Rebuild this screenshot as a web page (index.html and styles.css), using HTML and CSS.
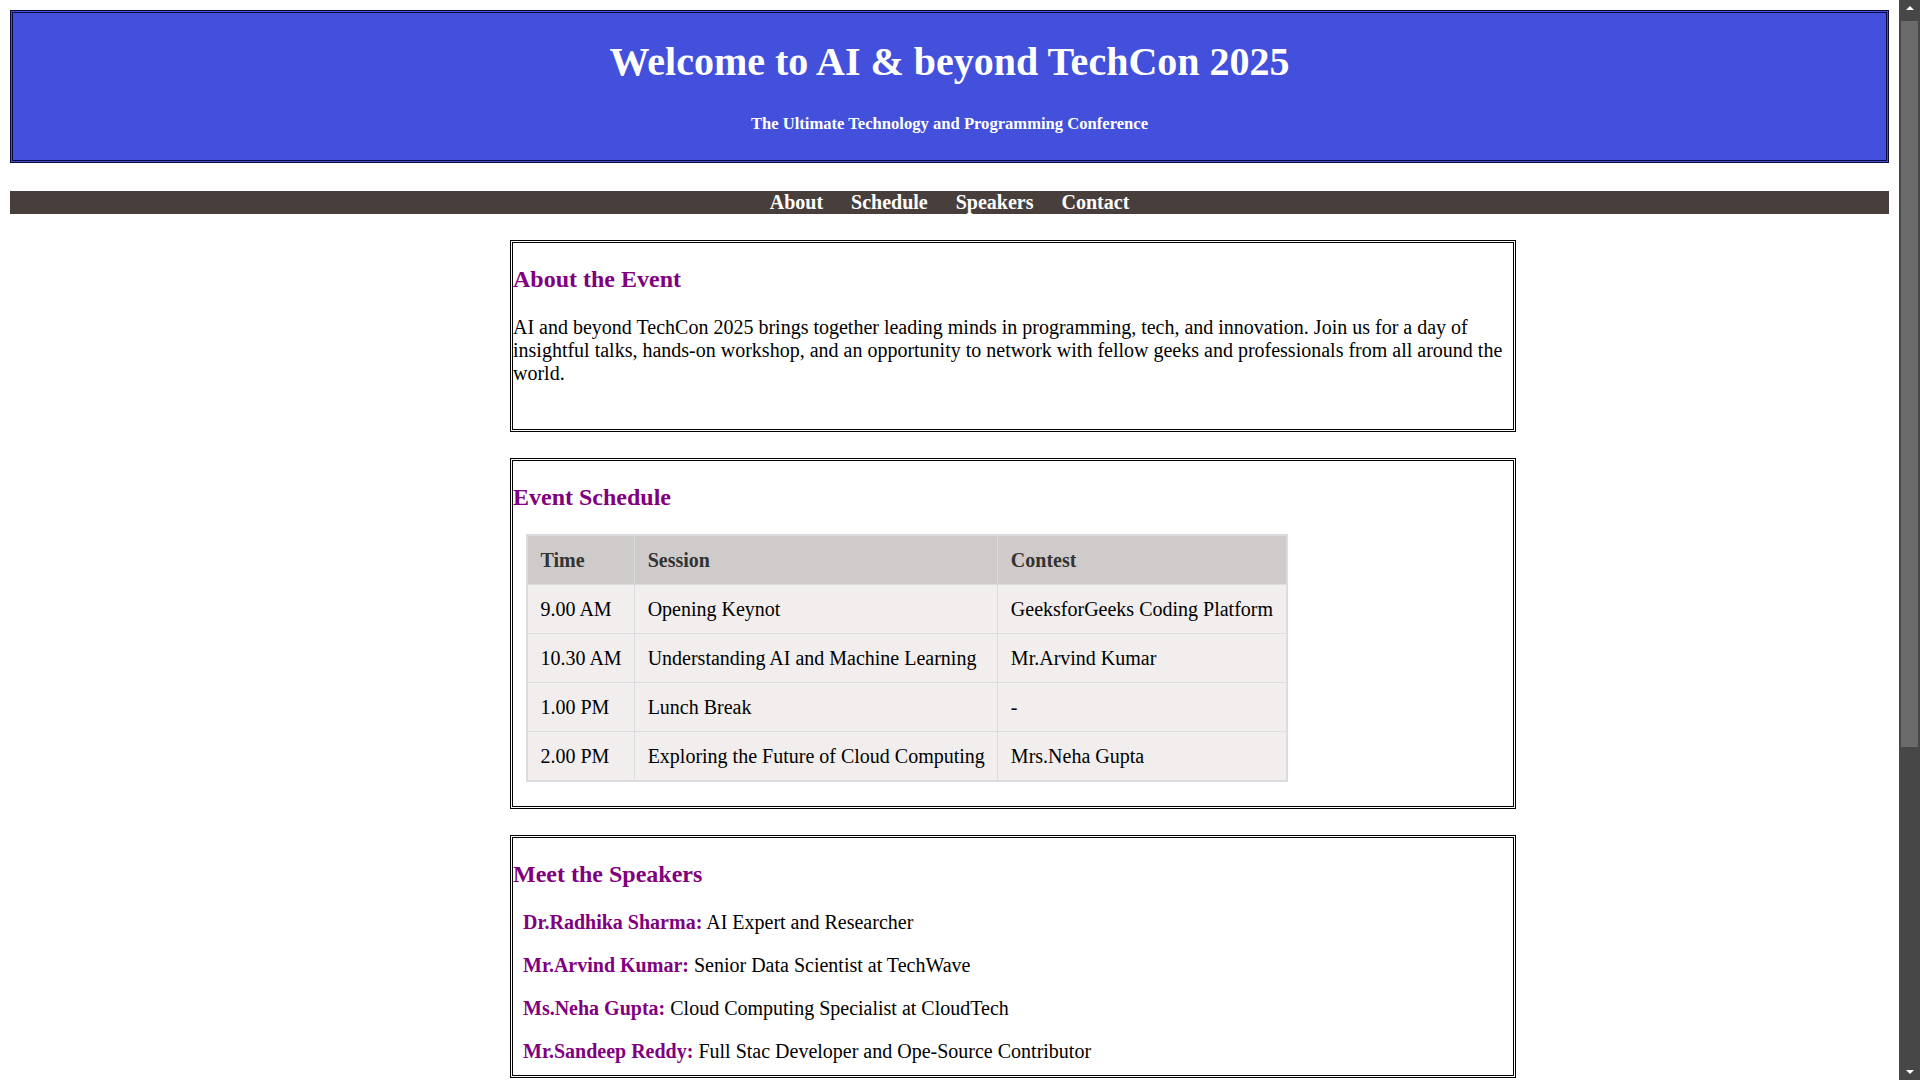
FILE: index.html
```html
<!DOCTYPE html>
<html lang="en">
<head>
<meta charset="utf-8">
<title>AI &amp; beyond TechCon 2025</title>
<link rel="stylesheet" href="styles.css">
</head>
<body>
<header class="site-header">
  <h1 class="site-title">Welcome to AI &amp; beyond TechCon 2025</h1>
  <h5 class="site-tagline">The Ultimate Technology and Programming Conference</h5>
</header>
<nav class="site-nav">
  <a class="nav-link" href="#about">About</a>
  <a class="nav-link" href="#schedule">Schedule</a>
  <a class="nav-link" href="#speakers">Speakers</a>
  <a class="nav-link" href="#contact">Contact</a>
</nav>
<main class="content">
  <section class="panel" id="about">
    <h2 class="panel-title">About the Event</h2>
    <p class="about-text">AI and beyond TechCon 2025 brings together leading minds in programming, tech, and innovation. Join us for a day of insightful talks, hands-on workshop, and an opportunity to network with fellow geeks and professionals from all around the world.</p>
  </section>
  <section class="panel" id="schedule">
    <h2 class="panel-title">Event Schedule</h2>
    <table class="schedule">
      <thead>
        <tr><th>Time</th><th>Session</th><th>Contest</th></tr>
      </thead>
      <tbody>
        <tr><td>9.00 AM</td><td>Opening Keynot</td><td>GeeksforGeeks Coding Platform</td></tr>
        <tr><td>10.30 AM</td><td>Understanding AI and Machine Learning</td><td>Mr.Arvind Kumar</td></tr>
        <tr><td>1.00 PM</td><td>Lunch Break</td><td>-</td></tr>
        <tr><td>2.00 PM</td><td>Exploring the Future of Cloud Computing</td><td>Mrs.Neha Gupta</td></tr>
      </tbody>
    </table>
  </section>
  <section class="panel" id="speakers">
    <h2 class="panel-title">Meet the Speakers</h2>
    <p class="speaker"><strong class="speaker-name">Dr.Radhika Sharma:</strong> AI Expert and Researcher</p>
    <p class="speaker"><strong class="speaker-name">Mr.Arvind Kumar:</strong> Senior Data Scientist at TechWave</p>
    <p class="speaker"><strong class="speaker-name">Ms.Neha Gupta:</strong> Cloud Computing Specialist at CloudTech</p>
    <p class="speaker"><strong class="speaker-name">Mr.Sandeep Reddy:</strong> Full Stac Developer and Ope-Source Contributor</p>
  </section>
  <section class="panel" id="contact">
    <h2 class="panel-title">Contact Us</h2>
    <p class="contact-text">Have questions? Reach out to us at <strong>info@techcon2025.com</strong></p>
    <form class="contact-form">
      <label class="field">Name <input class="field-input" type="text"></label>
      <label class="field">Email <input class="field-input" type="email"></label>
      <label class="field">Message <textarea class="field-area"></textarea></label>
      <button class="submit" type="button">Send</button>
    </form>
  </section>
</main>
<footer class="site-footer">&copy; 2025 AI &amp; beyond TechCon. All rights reserved.</footer>
<div class="scrollbar" aria-hidden="true">
  <span class="scroll-arrow scroll-arrow-up"></span>
  <span class="scroll-thumb"></span>
  <span class="scroll-arrow scroll-arrow-down"></span>
</div>
</body>
</html>
```

FILE: styles.css
```css
html {
  background: #fff;
}

body {
  margin: 10px 31px 10px 10px;
  font-family: "Liberation Serif", "Times New Roman", serif;
  font-size: 20px;
  color: #000;
}

.site-header {
  background: #4250dc;
  border: 3px double #0b0b3b;
  color: #fff;
  text-align: center;
  margin-bottom: 28px;
}

.site-title {
  font-size: 40px;
  line-height: 46px;
  font-weight: bold;
  margin: 26px 0 0;
}

.site-tagline {
  font-size: 16.6px;
  line-height: 19px;
  font-weight: bold;
  margin: 28.5px 0 27.7px;
}

.site-nav {
  background: #483f3c;
  display: flex;
  justify-content: center;
  gap: 28px;
  line-height: 23px;
  height: 23px;
}

.nav-link {
  color: #fff;
  font-weight: bold;
  text-decoration: none;
  font-size: 20px;
}

.content {
  display: flex;
  flex-direction: column;
  gap: 26px;
  padding-top: 26px;
}

.panel {
  width: 1000px;
  margin-left: 500px;
  border: 3px double #000;
}

.panel-title {
  color: #800080;
  font-size: 24px;
  line-height: 28px;
  font-weight: bold;
  margin: 22px 0 23px;
}

.about-text {
  margin: 0 0 44px;
  line-height: 23px;
}

.schedule {
  border-collapse: collapse;
  border: 2px solid #dcdce0;
  margin: 2px 0 24px 13px;
  line-height: 23px;
}

.schedule th,
.schedule td {
  border: 1px solid #dcdce0;
  padding: 12.5px;
  text-align: left;
}

.schedule th {
  background: #cfcbca;
  color: #333;
  font-weight: bold;
}

.schedule td {
  background: #f1eeed;
}

.speaker {
  margin: 0 0 20px;
  padding-left: 10px;
  line-height: 23px;
}

.speaker:last-child {
  margin-bottom: 12px;
}

.speaker-name {
  color: #800080;
}

.contact-text {
  margin: 0 0 20px;
  line-height: 23px;
}

.contact-form {
  display: flex;
  flex-direction: column;
  gap: 14px;
  padding: 0 10px 24px;
}

.field {
  display: flex;
  flex-direction: column;
  gap: 4px;
}

.field-input,
.field-area {
  width: 400px;
  font: inherit;
  padding: 4px;
  border: 1px solid #999;
}

.field-area {
  height: 60px;
}

.submit {
  align-self: flex-start;
  font: inherit;
  color: #fff;
  background: #483f3c;
  border: none;
  padding: 6px 18px;
}

.site-footer {
  margin-top: 26px;
  background: #483f3c;
  color: #fff;
  text-align: center;
  line-height: 23px;
  padding: 12px 0;
}

/* visual replica of the window's scrollbar */
.scrollbar {
  position: fixed;
  top: 0;
  right: 0;
  width: 21px;
  height: 100vh;
  background: #474747;
}

.scroll-thumb {
  position: absolute;
  top: 21px;
  left: 2px;
  right: 2px;
  height: 726px;
  background: #6b6b6b;
}

.scroll-arrow {
  position: absolute;
  left: 7px;
  width: 0;
  height: 0;
  border-left: 4px solid transparent;
  border-right: 4px solid transparent;
}

.scroll-arrow-up {
  top: 6px;
  border-bottom: 4px solid #fff;
}

.scroll-arrow-down {
  bottom: 6px;
  border-top: 4px solid #fff;
}
```
